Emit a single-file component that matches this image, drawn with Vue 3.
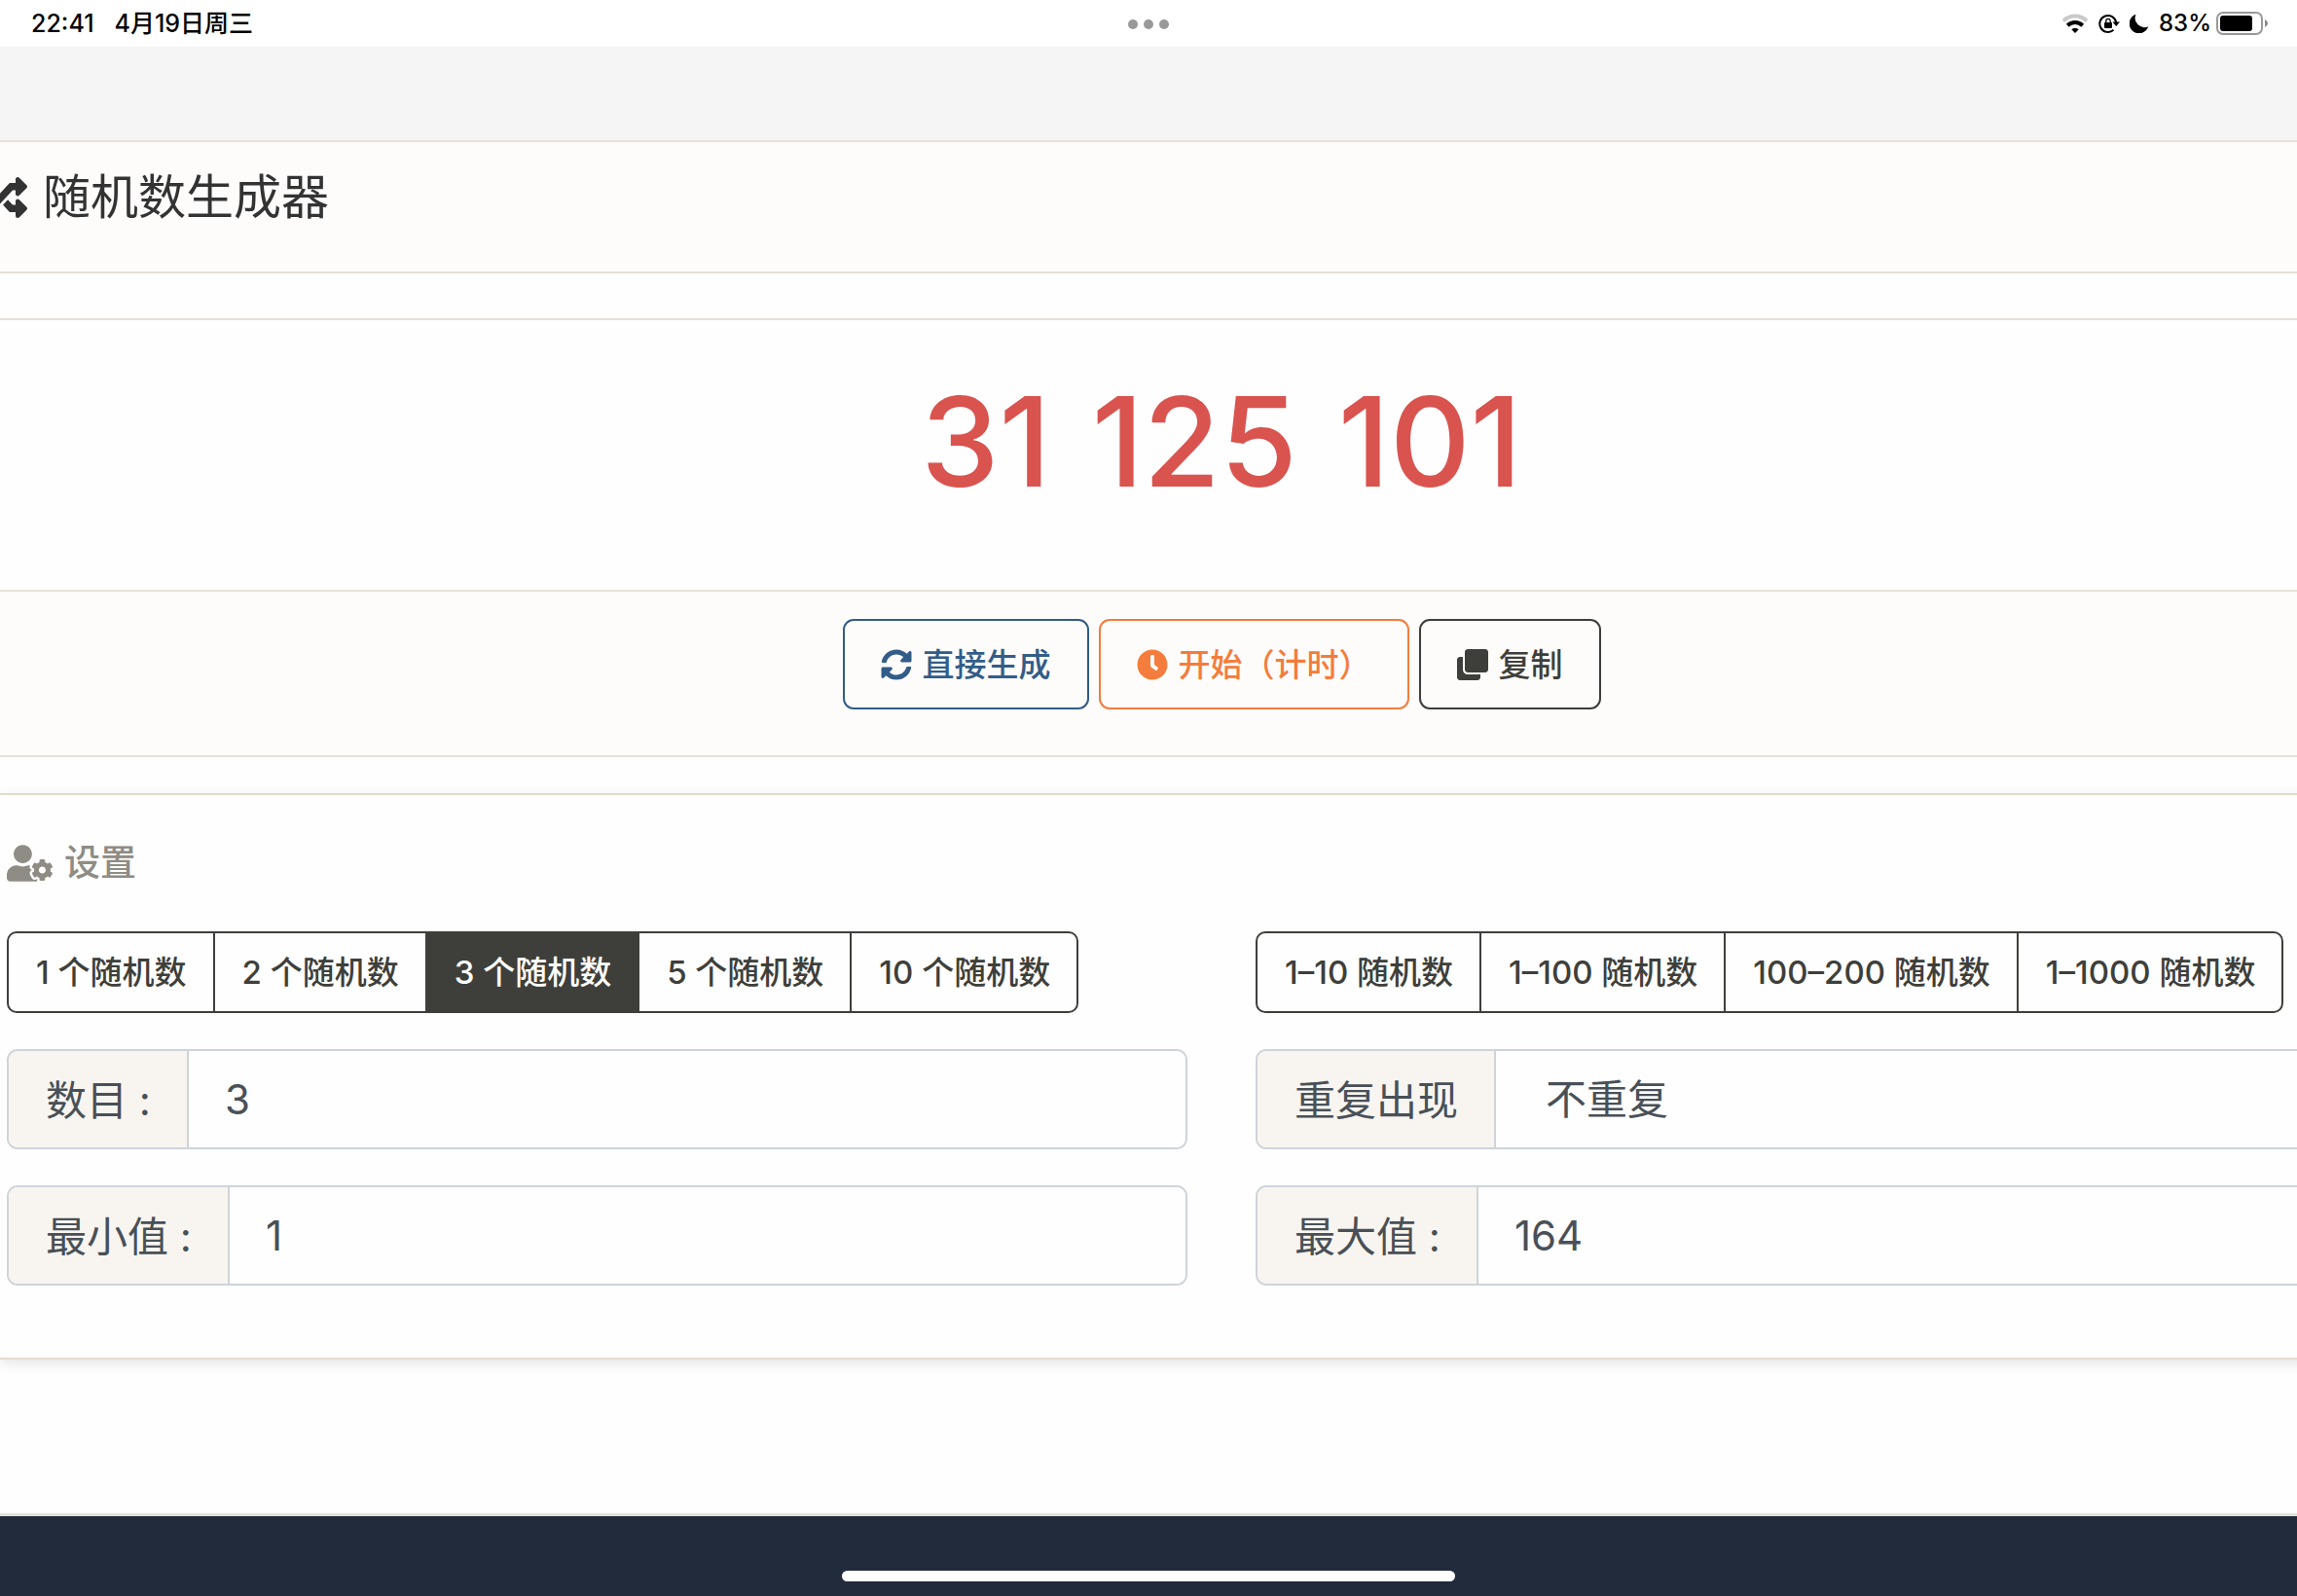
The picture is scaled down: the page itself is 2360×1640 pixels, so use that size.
<script setup>
import { ref } from 'vue'

const counts = [1, 2, 3, 5, 10]
const ranges = [[1, 10], [1, 100], [100, 200], [1, 1000]]

const count = ref(3)
const min = ref(1)
const max = ref(164)
const repeat = ref('no')
const result = ref([31, 125, 101])
const timer = ref(null)

function generate() {
  const out = []
  const span = max.value - min.value + 1
  while (out.length < count.value && (repeat.value === 'yes' || out.length < span)) {
    const n = min.value + Math.floor(Math.random() * span)
    if (repeat.value === 'yes' || !out.includes(n)) out.push(n)
  }
  result.value = out
}

function toggleTimer() {
  if (timer.value) {
    clearInterval(timer.value)
    timer.value = null
  } else {
    timer.value = setInterval(generate, 60)
  }
}

function copy() {
  navigator.clipboard?.writeText(result.value.join(' '))
}

function setRange([low, high]) {
  min.value = low
  max.value = high
}
</script>

<template>
  <div class="screen">
    <header class="status">
      <div class="status-side status-left">
        <span>22:41</span>
        <span>4月19日周三</span>
      </div>
      <div class="dots"><i></i><i></i><i></i></div>
      <div class="status-side status-right">
        <svg class="wifi" viewBox="0 0 28 20" width="28" height="20">
          <path d="M2 7.500A17 17 0 0 1 26 7.500" fill="none" stroke="#c9c9c9" stroke-width="4" />
          <path d="M6.300 12.200A11 11 0 0 1 21.700 12.200" fill="none" stroke="#000" stroke-width="4" />
          <path d="M10.300 16.200A5.300 5.300 0 0 1 17.700 16.200L14 20Z" fill="#000" />
        </svg>
        <svg class="lock" viewBox="0 0 22 20" width="22" height="20">
          <path d="M15.500 16.800A8.500 8.500 0 1 1 18.200 9" fill="none" stroke="#000" stroke-width="2" />
          <path d="M14.500 8.500H22L18.200 13Z" fill="#000" />
          <rect x="6" y="9" width="8" height="6" rx="1" fill="#000" />
          <path d="M7.800 9.500V7.500a2.200 2.200 0 0 1 4.400 0v2" fill="none" stroke="#000" stroke-width="1.300" />
        </svg>
        <svg class="moon" viewBox="0 0 20 20" width="20" height="20">
          <path d="M6.500 .8A10 10 0 1 0 19.200 13.200A9.500 9.500 0 0 1 6.500 .8Z" fill="#000" />
        </svg>
        <div class="power">
          <span>83%</span>
          <svg viewBox="0 0 54 24" width="54" height="24">
            <rect x="1" y="1" width="46" height="22" rx="6" fill="none" stroke="#999" stroke-width="2" />
            <rect x="4" y="4" width="33" height="16" rx="3" fill="#000" />
            <path d="M50 8q3 1.500 3 4t-3 4z" fill="#888" />
          </svg>
        </div>
      </div>
    </header>

    <div class="band"></div>

    <main class="page">
      <section class="title-bar">
        <h1>
          <svg viewBox="0 0 512 512" width="48" height="48"><path fill="currentColor" d="M504.971 359.029c9.373 9.373 9.373 24.569 0 33.941l-80 79.984c-15.010 15.010-40.971 4.490-40.971-16.971V416h-58.785a12.004 12.004 0 0 1-8.773-3.812l-70.556-75.596 53.333-57.143L352 336h32v-39.981c0-21.438 25.943-31.998 40.971-16.971l80 79.981zM12 176h84l52.781 56.551 53.333-57.143-70.556-75.596A11.999 11.999 0 0 0 122.785 96H12c-6.627 0-12 5.373-12 12v56c0 6.627 5.373 12 12 12zm372 0v39.984c0 21.460 25.961 31.980 40.971 16.971l80-79.984c9.373-9.373 9.373-24.569 0-33.941l-80-79.981C409.943 24.021 384 34.582 384 56.019V96h-58.785a12.004 12.004 0 0 0-8.773 3.812L96 336H12c-6.627 0-12 5.373-12 12v56c0 6.627 5.373 12 12 12h110.785c3.326 0 6.503-1.381 8.773-3.812L352 176h32z" /></svg>
          <span>随机数生成器</span>
        </h1>
      </section>

      <section class="result">
        <output class="numbers"><span v-for="(n, i) in result" :key="i">{{ n }}</span></output>
        <div class="actions">
          <button type="button" class="btn blue" @click="generate">
            <svg viewBox="0 0 512 512" width="32" height="32"><path fill="currentColor" d="M370.720 133.280C339.458 104.008 298.888 87.962 255.848 88c-77.458.068-144.328 53.178-162.791 126.850-1.344 5.363-6.122 9.150-11.651 9.150H24.103c-7.498 0-13.194-6.807-11.807-14.176C33.933 94.924 134.813 8 256 8c66.448 0 126.791 26.136 171.315 68.685L463.030 40.970C478.149 25.851 504 36.559 504 57.941V192c0 13.255-10.745 24-24 24H345.941c-21.382 0-32.090-25.851-16.971-40.971l41.750-41.749zM32 296h134.059c21.382 0 32.090 25.851 16.971 40.971l-41.750 41.750c31.262 29.273 71.835 45.319 114.876 45.280 77.418-.070 144.315-53.144 162.787-126.849 1.344-5.363 6.122-9.150 11.651-9.150h57.304c7.498 0 13.194 6.807 11.807 14.176C478.067 417.076 377.187 504 256 504c-66.448 0-126.791-26.136-171.315-68.685L48.970 471.030C33.851 486.149 8 475.441 8 454.059V320c0-13.255 10.745-24 24-24z" /></svg>
            <span>直接生成</span>
          </button>
          <button type="button" class="btn orange" @click="toggleTimer">
            <svg viewBox="0 0 512 512" width="32" height="32"><path fill="currentColor" d="M256,8C119,8,8,119,8,256S119,504,256,504,504,393,504,256,393,8,256,8Zm92.490,313h0l-20,25a16,16,0,0,1-22.490,2.500h0l-67-49.720a40,40,0,0,1-15-31.230V112a16,16,0,0,1,16-16h32a16,16,0,0,1,16,16V256l58,42.500A16,16,0,0,1,348.490,321Z" /></svg>
            <span>开始（计时）</span>
          </button>
          <button type="button" class="btn dark" @click="copy">
            <svg viewBox="0 0 512 512" width="32" height="32"><path fill="currentColor" d="M464 0c26.510 0 48 21.490 48 48v288c0 26.510-21.490 48-48 48H176c-26.510 0-48-21.490-48-48V48c0-26.510 21.490-48 48-48h288M176 416c-44.112 0-80-35.888-80-80V128H48c-26.510 0-48 21.490-48 48v288c0 26.510 21.490 48 48 48h288c26.510 0 48-21.490 48-48v-48H176z" /></svg>
            <span>复制</span>
          </button>
        </div>
      </section>

      <section class="settings">
        <h2>
          <svg viewBox="0 0 640 512" width="47" height="38"><path fill="currentColor" d="M610.500 373.300c2.600-14.100 2.600-28.500 0-42.600l25.800-14.900c3-1.700 4.300-5.200 3.300-8.500-6.700-21.600-18.200-41.200-33.200-57.400-2.300-2.500-6-3.100-9-1.400l-25.800 14.900c-10.900-9.300-23.400-16.500-36.900-21.300v-29.800c0-3.400-2.400-6.400-5.700-7.100-22.300-5-45-4.800-66.200 0-3.300.7-5.700 3.700-5.700 7.100v29.800c-13.500 4.800-26 12-36.900 21.300l-25.800-14.900c-2.900-1.700-6.700-1.100-9 1.400-15 16.200-26.500 35.800-33.200 57.400-1 3.300.4 6.800 3.300 8.500l25.800 14.900c-2.600 14.100-2.600 28.500 0 42.600l-25.800 14.900c-3 1.700-4.300 5.200-3.300 8.500 6.700 21.600 18.200 41.100 33.200 57.400 2.300 2.500 6 3.100 9 1.400l25.800-14.900c10.900 9.300 23.400 16.500 36.900 21.300v29.800c0 3.400 2.400 6.400 5.700 7.100 22.300 5 45 4.800 66.200 0 3.300-.7 5.700-3.700 5.700-7.100v-29.800c13.500-4.800 26-12 36.900-21.300l25.800 14.900c2.900 1.700 6.700 1.100 9-1.400 15-16.200 26.500-35.800 33.200-57.400 1-3.300-.4-6.800-3.300-8.500l-25.800-14.900zM496 400.500c-26.800 0-48.500-21.800-48.500-48.500s21.800-48.500 48.500-48.500 48.500 21.800 48.500 48.500-21.700 48.500-48.500 48.500zM224 256c70.700 0 128-57.300 128-128S294.700 0 224 0 96 57.300 96 128s57.300 128 128 128zm201.200 226.500c-2.300-1.200-4.600-2.600-6.800-3.900l-7.900 4.600c-6 3.400-12.800 5.300-19.600 5.300-10.900 0-21.400-4.600-28.900-12.600-18.300-19.800-32.300-43.900-40.200-69.600-5.500-17.700 1.900-36.400 17.900-45.700l7.900-4.600c-.1-2.600-.1-5.200 0-7.800l-7.900-4.600c-16-9.200-23.400-28-17.900-45.700.9-2.900 2.200-5.800 3.200-8.700-3.800-.3-7.500-1.200-11.400-1.200h-16.700c-22.200 10.200-46.900 16-72.900 16s-50.600-5.800-72.900-16h-16.700C60.200 288 0 348.200 0 422.400V464c0 26.500 21.500 48 48 48h352c10.100 0 19.500-3.200 27.200-8.500-1.200-3.800-2-7.700-2-11.800v-9.200z" /></svg>
          <span>设置</span>
        </h2>
        <div class="grid">
          <div class="segments">
            <button v-for="n in counts" :key="n" type="button" :class="{ active: count === n }" @click="count = n">{{ n }} 个随机数</button>
          </div>
          <div class="segments">
            <button v-for="r in ranges" :key="r[1]" type="button" @click="setRange(r)">{{ r[0] }}–{{ r[1] }} 随机数</button>
          </div>
          <div class="field">
            <label for="count">数目 :</label>
            <input id="count" v-model.number="count" type="text" inputmode="numeric">
          </div>
          <div class="field">
            <label for="repeat">重复出现</label>
            <select id="repeat" v-model="repeat">
              <option value="no">不重复</option>
              <option value="yes">可重复</option>
            </select>
          </div>
          <div class="field">
            <label for="min">最小值 :</label>
            <input id="min" v-model.number="min" type="text" inputmode="numeric">
          </div>
          <div class="field">
            <label for="max">最大值 :</label>
            <input id="max" v-model.number="max" type="text" inputmode="numeric">
          </div>
        </div>
      </section>
    </main>

    <footer class="footer"><div class="home-bar"></div></footer>
  </div>
</template>

<style>
body {
  margin: 0;
  background: #fff;
}
</style>

<style scoped>
.screen {
  min-height: 100vh;
  display: flex;
  flex-direction: column;
  overflow: hidden;
  background: #fefefe;
  color: #3e3f3a;
  font-family: Inter, "Noto Sans CJK SC", sans-serif;
}
svg {
  display: block;
  flex: none;
}
button,
input,
select {
  font-family: inherit;
}

/* status bar */
.status {
  height: 48px;
  box-sizing: border-box;
  padding: 0 29px;
  display: grid;
  grid-template-columns: 1fr auto 1fr;
  align-items: center;
  background: #fff;
  color: #000;
  font-size: 24px;
  font-weight: 500;
  line-height: 48px;
}
.status-side {
  display: flex;
  align-items: center;
}
.status-left {
  padding-left: 3px;
  gap: 21px;
  font-size: 25px;
}
.status-right {
  justify-content: flex-end;
  gap: 10px;
}
.power {
  display: flex;
  align-items: center;
  gap: 5px;
}
.dots {
  padding-top: 2px;
  display: flex;
  gap: 6px;
}
.dots i {
  width: 10px;
  height: 10px;
  border-radius: 50%;
  background: #999;
}

.band {
  height: 96px;
  background: #f5f5f5;
}

/* the zoomed page runs past the right edge of the window */
.page {
  margin-right: -150px;
}
.title-bar {
  border: solid #e6e1d8;
  border-width: 2px 0;
  background: #fdfcfa;
}
h1 {
  margin: 0 0 0 -20px;
  padding: 28px 0 47px;
  display: flex;
  align-items: center;
  gap: 16px;
  color: #333;
  font-size: 49px;
  font-weight: 400;
  line-height: 58px;
}

.result {
  margin-top: 46px;
  border: solid #e6e1d8;
  border-width: 2px 0;
}
.numbers {
  padding: 45px 0 72px;
  display: flex;
  justify-content: center;
  gap: 42px;
  color: #d9534f;
  font-size: 128px;
  font-weight: 500;
  line-height: 160px;
}
.actions {
  padding: 28px 0 47px;
  display: flex;
  justify-content: center;
  gap: 10px;
  border-top: 2px solid #e6e1d8;
  background: #fdfcfa;
}
.btn {
  box-sizing: border-box;
  height: 93px;
  padding: 0 37px;
  display: flex;
  align-items: center;
  gap: 11px;
  border: 2px solid currentColor;
  border-radius: 11px;
  background: transparent;
  font-size: 33px;
  font-weight: 500;
}
.btn span {
  padding-bottom: 4px;
}
.blue { color: #325d88; }
.orange { color: #f47c3c; }
.dark { color: #3e3f3a; }

.settings {
  margin-top: 37px;
  padding: 0 7px 74px;
  border: solid #e3dccf;
  border-width: 2px 0;
  box-shadow: 0 4px 12px rgba(0, 0, 0, 0.1);
}
h2 {
  margin: 0;
  padding: 44px 0;
  display: flex;
  align-items: center;
  gap: 12px;
  color: #8e8c84;
  font-size: 37px;
  font-weight: 500;
  line-height: 52px;
}
.grid {
  display: grid;
  grid-template-columns: 1fr 1fr;
  gap: 37px 70px;
}
.segments {
  display: flex;
}
.segments button {
  box-sizing: border-box;
  height: 84px;
  margin: 0 0 0 -2px;
  padding: 0 27px 4px 28px;
  border: 2px solid #3e3f3a;
  background: transparent;
  color: #3e3f3a;
  font-size: 33px;
  font-weight: 500;
  white-space: nowrap;
}
.segments button:first-child {
  margin-left: 0;
  border-radius: 10px 0 0 10px;
}
.segments button:last-child {
  border-radius: 0 10px 10px 0;
}
.segments button.active {
  background: #3e3f3a;
  color: #fff;
}

.field {
  box-sizing: border-box;
  height: 103px;
  display: flex;
  overflow: hidden;
  border: 2px solid #ced4da;
  border-radius: 11px;
  color: #495057;
  font-size: 42px;
}
.field label {
  padding: 0 37px 4px 38px;
  display: flex;
  align-items: center;
  border-right: 2px solid #ced4da;
  background: #f8f5f0;
  white-space: pre;
}
.field input,
.field select {
  flex: 1;
  min-width: 0;
  padding: 0 37px;
  border: 0;
  outline: 0;
  appearance: none;
  background: #fefefe;
  color: inherit;
  font-size: 42px;
}
.field select {
  padding-left: 51px;
}

.footer {
  margin-top: auto;
  height: 82px;
  display: flex;
  align-items: flex-end;
  justify-content: center;
  border-top: 3px solid #e6e1d8;
  background: #222b3c;
}
.home-bar {
  width: 630px;
  height: 11px;
  margin-bottom: 15px;
  border-radius: 6px;
  background: #fff;
}
</style>
